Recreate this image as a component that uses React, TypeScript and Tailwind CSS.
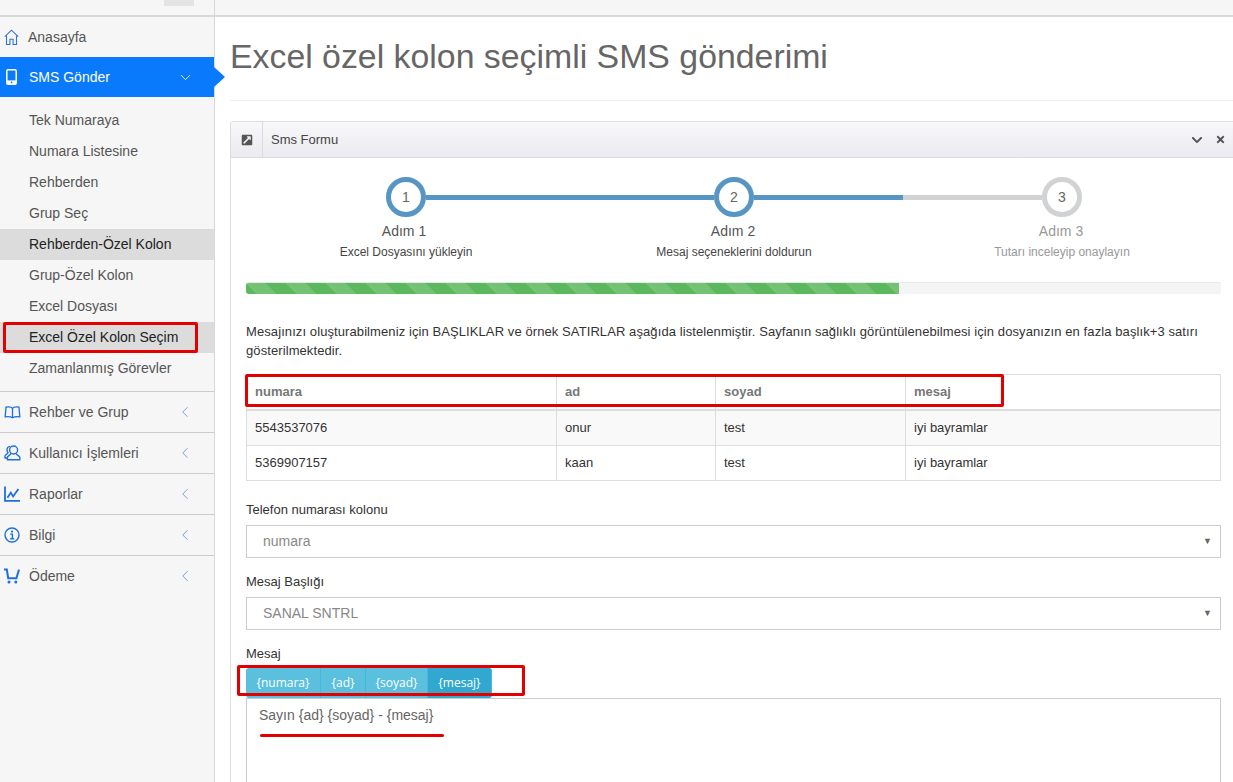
import { FaChevronDown, FaExternalLinkSquareAlt, FaTimes } from 'react-icons/fa';
import { ChevronDown, ChevronLeft } from 'lucide-react';

const subItems = [
  { label: 'Tek Numaraya' },
  { label: 'Numara Listesine' },
  { label: 'Rehberden' },
  { label: 'Grup Seç' },
  { label: 'Rehberden-Özel Kolon', active: true },
  { label: 'Grup-Özel Kolon' },
  { label: 'Excel Dosyası' },
  { label: 'Excel Özel Kolon Seçim', active: true, marked: true },
  { label: 'Zamanlanmış Görevler' },
];

function HomeIcon() {
  return (
    <svg width="15" height="17" viewBox="0 0 15 17" fill="none" stroke="#2f74d8" strokeWidth="1.1">
      <path d="M0.8 7.6 7.5 1.2l6.7 6.4" />
      <path d="M2.5 6.5v9h3.4v-5.2h3.2v5.2h3.4v-9" />
    </svg>
  );
}

function PhoneIcon() {
  return (
    <svg width="11" height="16" viewBox="0 0 11 16" fill="none">
      <rect x="0.8" y="0.8" width="9.4" height="14.4" rx="1.2" stroke="#fff" strokeWidth="1.5" />
      <rect x="0.8" y="11.4" width="9.4" height="3.8" fill="#fff" />
      <circle cx="5.5" cy="13.3" r="0.9" fill="#0a7afc" />
    </svg>
  );
}

function BookIcon() {
  return (
    <svg width="17" height="13" viewBox="0 0 17 13" fill="none" stroke="#1f6ee0" strokeWidth="1.3">
      <path d="M8.5 2.2C7.2.8 4.4.6 2 1.1L1.2 10.8c2.4-.4 5.3-.3 7.3 1 2-1.3 4.9-1.4 7.3-1L15 1.1C12.6.6 9.8.8 8.5 2.2Zm0 0v9.4" />
    </svg>
  );
}

function UsersIcon() {
  return (
    <svg width="17" height="16" viewBox="0 0 17 16" fill="none" stroke="#1f6ee0" strokeWidth="1.4">
      <circle cx="9.6" cy="5" r="4" />
      <path d="M7 8.4c-.2 1.6-2.7 2-3.4 3.4-.4.8-.3 1.9-.1 3h12.2c.2-1.1.3-2.2-.1-3-.7-1.4-3.2-1.8-3.4-3.4" />
      <path d="M6.2 1.4C4.2 1.6 3 3.1 3 5c0 1 .4 2 1 2.6C3.6 9 1.6 9.4 1.1 10.8c-.2.6-.2 1.5-.1 2.2h2" />
    </svg>
  );
}

function ChartIcon() {
  return (
    <svg width="16" height="16" viewBox="0 0 16 16" fill="none" stroke="#1f6ee0">
      <path d="M1 .5v14.4h15" strokeWidth="1.8" />
      <path d="M3.4 11.8 6.8 6.6l2.3 3.8 5.3-7.4" strokeWidth="1.8" />
    </svg>
  );
}

function InfoIcon() {
  return (
    <svg width="16" height="16" viewBox="0 0 16 16" fill="none" stroke="#1f6ee0">
      <circle cx="8" cy="8" r="7" strokeWidth="1.4" />
      <circle cx="8" cy="4.6" r="1.1" fill="#1f6ee0" stroke="none" />
      <path d="M6.2 7.1h2.2v4.4M6.2 11.7h4" strokeWidth="1.4" />
    </svg>
  );
}

function CartIcon() {
  return (
    <svg width="16" height="16" viewBox="0 0 16 16" fill="none" stroke="#1f6ee0" strokeWidth="2">
      <path d="M0 1.4h2.8l1.4 8.8h8.2L15 1.6" />
      <circle cx="5" cy="14" r="1.5" fill="#1f6ee0" stroke="none" />
      <circle cx="11.8" cy="14" r="1.5" fill="#1f6ee0" stroke="none" />
    </svg>
  );
}

const navItems = [
  { label: 'Rehber ve Grup', icon: <BookIcon /> },
  { label: 'Kullanıcı İşlemleri', icon: <UsersIcon /> },
  { label: 'Raporlar', icon: <ChartIcon /> },
  { label: 'Bilgi', icon: <InfoIcon /> },
  { label: 'Ödeme', icon: <CartIcon /> },
];

const rows = [
  { cells: ['5543537076', 'onur', 'test', 'iyi bayramlar'], rowClass: 'h-[36px] bg-[#f9f9f9]' },
  { cells: ['5369907157', 'kaan', 'test', 'iyi bayramlar'], rowClass: 'h-[35px]' },
];

const tokens = [
  { label: '{numara}', cls: 'w-[75px] bg-[#5bc0de] rounded-l-[3px]' },
  { label: '{ad}', cls: 'w-[45px] bg-[#5bc0de]' },
  { label: '{soyad}', cls: 'w-[62px] bg-[#5bc0de]' },
  { label: '{mesaj}', cls: 'w-[64px] bg-[#31a8cf] rounded-r-[3px]' },
];

function Sidebar() {
  return (
    <aside className="w-[215px] shrink-0 bg-[#f6f6f6] border-r border-[#d8d8d8] h-full">
      <div className="h-[17px] border-b-2 border-[#d9d9d9] relative">
        <div className="absolute left-[164px] top-0 w-[30px] h-[6px] bg-[#e4e4e4]" />
      </div>
      <div className="h-[40px] flex items-center pl-[4px] text-[#555]">
        <span className="w-[24px] flex"><HomeIcon /></span>
        <span>Anasayfa</span>
      </div>
      <div className="h-[40px] flex items-center pl-[6px] bg-[#0a7afc] text-white relative w-[214px]">
        <span className="w-[23px] flex"><PhoneIcon /></span>
        <span>SMS Gönder</span>
        <ChevronDown size={17} strokeWidth={1.2} className="ml-auto mr-[20px]" />
        <div className="absolute left-full top-[10px] border-l-[11px] border-l-[#0a7afc] border-y-[10px] border-y-transparent" />
      </div>
      <div className="pt-[8px] pb-[7px]">
        {subItems.map((item) => (
          <div
            key={item.label}
            className={`h-[31px] flex items-center pl-[29px] relative ${item.active ? 'bg-[#dcdcdc] text-[#222]' : 'text-[#555]'}`}
          >
            {item.label}
            {item.marked && (
              <div className="absolute left-[3px] top-0 w-[195px] h-[31px] border-[3px] border-[#e30000] rounded-[2px]" />
            )}
          </div>
        ))}
      </div>
      {navItems.map((item) => (
        <div
          key={item.label}
          className="h-[41px] flex items-center pl-[4px] text-[#555] border-t border-[#cccccc]"
        >
          <span className="w-[25px] flex">{item.icon}</span>
          <span>{item.label}</span>
          <ChevronLeft size={18} strokeWidth={1} className="ml-auto mr-[20px] text-[#4f7fe0]" />
        </div>
      ))}
    </aside>
  );
}

function Stepper() {
  const circle = 'w-[40px] h-[40px] rounded-full border-[5px] flex items-center justify-center text-[14px] shrink-0 bg-white';
  return (
    <div className="pt-[19px]">
      <div className="flex items-center pl-[140px]">
        <div className={`${circle} border-[#5796c3] text-[#666]`}>1</div>
        <div className="w-[288px] h-[5px] bg-[#5796c3]" />
        <div className={`${circle} border-[#5796c3] text-[#666]`}>2</div>
        <div className="w-[149px] h-[5px] bg-[#5796c3]" />
        <div className="w-[139px] h-[5px] bg-[#d0d2d4]" />
        <div className={`${circle} border-[#d0d2d4] text-[#666]`}>3</div>
      </div>
      <div className="grid grid-cols-[328px_328px_328px] ml-[-4px] mt-[4px] text-center">
        <div>
          <div className="text-[14px] leading-[20px] text-[#555] pr-[4px]">Adım 1</div>
          <div className="text-[12px] leading-[20px] mt-[1px] text-[#444]">Excel Dosyasını yükleyin</div>
        </div>
        <div>
          <div className="text-[14px] leading-[20px] text-[#555] pr-[2px]">Adım 2</div>
          <div className="text-[12px] leading-[20px] mt-[1px] text-[#444]">Mesaj seçeneklerini doldurun</div>
        </div>
        <div>
          <div className="text-[14px] leading-[20px] text-[#999] pr-[2px]">Adım 3</div>
          <div className="text-[12px] leading-[20px] mt-[1px] text-[#999]">Tutarı inceleyip onaylayın</div>
        </div>
      </div>
    </div>
  );
}

function Select({ value }: { value: string }) {
  return (
    <div className="h-[33px] border border-[#cccccc] flex items-center pl-[16px] pr-[8px] text-[14px] text-[#888] mt-[7px]">
      <span>{value}</span>
      <span className="ml-auto text-[9px] text-[#666]">▼</span>
    </div>
  );
}

export default function App() {
  return (
    <div className="h-screen w-full overflow-hidden flex bg-white text-[14px] text-[#333] font-['Liberation_Sans',Arial,sans-serif]">
      <Sidebar />
      <main className="flex-1 min-w-0 h-full flex flex-col">
        <div className="h-[17px] shrink-0 bg-[#f6f6f6] border-b-2 border-[#d9d9d9]" />
        <div className="pl-[15px]">
          <h1 className="text-[33.85px] leading-[40px] text-[#666] pt-[19px] pb-[24px] border-b border-[#eeeeee]">
            Excel özel kolon seçimli SMS gönderimi
          </h1>
          <section className="mt-[20px] border-t border-l border-[#dddddd] rounded-tl-[3px] h-[700px]">
            <header className="h-[36px] flex items-center bg-[linear-gradient(#f8f8fa,#eaeaf0)] border-b border-[#dddddd]">
              <span className="w-[32px] h-full flex items-center justify-center border-r border-[#dddddd]">
                <FaExternalLinkSquareAlt size={12} className="text-[#555]" />
              </span>
              <span className="pl-[8px] pt-[1px] text-[13px] text-[#444]">Sms Formu</span>
              <FaChevronDown size={12} className="ml-auto text-[#555]" />
              <FaTimes size={11} className="ml-[12px] mr-[7px] text-[#555]" />
            </header>
            <div className="pl-[14px] pr-[12px] ml-[1px]">
              <Stepper />
              <div className="mt-[20px] h-[12px] rounded-[3px] bg-[#f5f5f5] border-t border-[#e8e8e8] overflow-hidden">
                <div className="w-[67%] h-full bg-[#5cb85c] bg-[linear-gradient(45deg,rgba(255,255,255,.15)_25%,transparent_25%,transparent_50%,rgba(255,255,255,.15)_50%,rgba(255,255,255,.15)_75%,transparent_75%,transparent)] bg-[length:40px_40px]" />
              </div>
              <p className="mt-[28px] text-[13px] tracking-[0.09px] leading-[19px] text-[#333]">
                Mesajınızı oluşturabilmeniz için BAŞLIKLAR ve örnek SATIRLAR aşağıda listelenmiştir. Sayfanın sağlıklı görüntülenebilmesi için dosyanızın en fazla başlık+3 satırı gösterilmektedir.
              </p>
              <div className="relative mt-[14px]">
                <table className="w-full table-fixed border-collapse text-[13px]">
                  <colgroup>
                    <col className="w-[310px]" />
                    <col className="w-[159px]" />
                    <col className="w-[190px]" />
                    <col />
                  </colgroup>
                  <thead>
                    <tr className="h-[35px] text-left text-[#777]">
                      {['numara', 'ad', 'soyad', 'mesaj'].map((h) => (
                        <th key={h} className="border border-[#dddddd] border-b-2 px-[8px] font-bold text-[13px]">{h}</th>
                      ))}
                    </tr>
                  </thead>
                  <tbody>
                    {rows.map((row) => (
                      <tr key={row.cells[0]} className={row.rowClass}>
                        {row.cells.map((cell) => (
                          <td key={cell} className="border border-[#dddddd] px-[8px]">{cell}</td>
                        ))}
                      </tr>
                    ))}
                  </tbody>
                </table>
                <div className="absolute left-[-1px] top-0 w-[759px] h-[33px] border-[3px] border-[#e30000] rounded-[2px]" />
              </div>
              <label className="block mt-[20px] text-[13px] leading-[17px]">Telefon numarası kolonu</label>
              <Select value="numara" />
              <label className="block mt-[15px] text-[13px] leading-[17px]">Mesaj Başlığı</label>
              <Select value="SANAL SNTRL" />
              <label className="block mt-[15px] text-[13px] leading-[17px]">Mesaj</label>
              <div className="relative mt-[6px] flex">
                {tokens.map((t) => (
                  <span
                    key={t.label}
                    className={`h-[30px] flex items-center justify-center text-[12px] font-['Open_Sans',sans-serif] text-white border-r border-[#46b8da] ${t.cls}`}
                  >
                    {t.label}
                  </span>
                ))}
                <div className="absolute left-[-9px] top-[-3px] w-[288px] h-[31px] border-[3px] border-[#e30000] rounded-[2px]" />
              </div>
              <div className="relative border border-[#cccccc] h-[200px] pl-[12px] pt-[7px] text-[#666] text-[14px] leading-[18px]">
                Sayın {'{ad}'} {'{soyad}'} - {'{mesaj}'}
                <div className="absolute left-[13px] top-[35px] w-[184px] h-[3px] rounded-full bg-[#e30000]" />
              </div>
            </div>
          </section>
        </div>
      </main>
    </div>
  );
}
